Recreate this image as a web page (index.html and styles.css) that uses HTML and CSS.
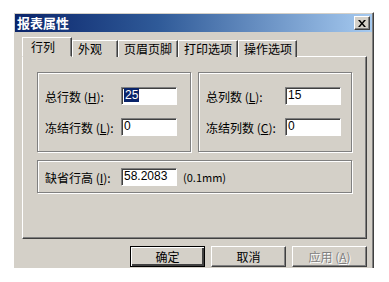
FILE: index.html
```html
<!DOCTYPE html>
<html lang="zh-CN">
<head>
    <meta charset="UTF-8">
    <title>报表属性</title>
    <link rel="stylesheet" href="styles.css">
</head>
<body>

    <div class="dialog">
        <div class="titlebar">
            <span class="title">报表属性</span>
            <span class="close-btn">
                <svg width="8" height="7" viewBox="0 0 8 7">
                    <path d="M0 0h2l2 2.5 2-2.5h2l-3 3.5 3 3.5h-2l-2-2.5-2 2.5h-2l3-3.5z" fill="#000"/>
                </svg>
            </span>
        </div>

        <div class="dialog-body">
            <!-- Tabs -->
            <div class="tabs">
                <div class="tab active">行列</div>
                <div class="tab">外观</div>
                <div class="tab">页眉页脚</div>
                <div class="tab">打印选项</div>
                <div class="tab">操作选项</div>
            </div>

            <div class="panel">
                <div class="group-row">
                    <div class="group">
                        <div class="field">
                            <label class="lbl lbl-left">总行数 (<u>H</u>):</label>
                            <span class="edit"><span class="selected">25</span></span>
                        </div>
                        <div class="field">
                            <label class="lbl lbl-left">冻结行数 (<u>L</u>):</label>
                            <span class="edit">0</span>
                        </div>
                    </div>
                    <div class="group">
                        <div class="field">
                            <label class="lbl lbl-right">总列数 (<u>L</u>):</label>
                            <span class="edit">15</span>
                        </div>
                        <div class="field">
                            <label class="lbl lbl-right">冻结列数 (<u>C</u>):</label>
                            <span class="edit">0</span>
                        </div>
                    </div>
                </div>

                <div class="group group-wide">
                    <div class="field">
                        <label class="lbl lbl-bottom">缺省行高 (<u>I</u>):</label>
                        <span class="edit">58.2083</span>
                        <span class="unit">(0.1mm)</span>
                    </div>
                </div>
            </div>

            <!-- Buttons -->
            <div class="buttons">
                <button class="btn default">确定</button>
                <button class="btn">取消</button>
                <button class="btn disabled">应用 (<u>A</u>)</button>
            </div>
        </div>
    </div>

</body>
</html>
```

FILE: styles.css
```css
/* Basic Reset */
* {
    margin: 0;
    padding: 0;
    box-sizing: border-box;
}

body {
    font-family: "Noto Sans CJK SC", "DejaVu Sans", sans-serif;
    font-size: 12px;
    background-color: #fff;
    color: #000;
}

.dialog {
    margin: 12px 0 0 13px;
    width: 361px;
    height: 256px;
    padding: 1px 1px 0 1px;
    background-color: #d4d0c8;
    border-left: 1px solid #fff;
    border-top: 1px solid #fff;
    border-right: 1px solid #404040;
    box-shadow: inset -1px 0 0 #808080;
    overflow: hidden;
}

.titlebar {
    height: 18px;
    display: flex;
    align-items: center;
    justify-content: space-between;
    padding: 0 2px 0 2px;
    background: linear-gradient(to right, #0a246a 0%, #2f5a98 40%, #a6caf0 100%);
}

.title {
    color: #fff;
    font-weight: bold;
    font-size: 13px;
    line-height: 18px;
}

.close-btn {
    width: 16px;
    height: 14px;
    display: flex;
    align-items: center;
    justify-content: center;
    background-color: #d4d0c8;
    border-top: 1px solid #fff;
    border-left: 1px solid #fff;
    border-right: 1px solid #404040;
    border-bottom: 1px solid #404040;
    box-shadow: inset -1px -1px 0 #808080;
}

.dialog-body {
    padding: 5px 5px 0 7px;
}

/* Tabs */
.tabs {
    display: flex;
    align-items: flex-end;
    height: 20px;
    position: relative;
    z-index: 1;
    margin-bottom: -1px;
}

.tab {
    height: 17px;
    padding: 0 0 0 5px;
    line-height: 15px;
    white-space: nowrap;
    border-left: 1px solid #fff;
    border-top: 1px solid #fff;
    border-right: 1px solid #404040;
    box-shadow: inset -1px 0 0 #808080;
    background-color: #d4d0c8;
}

.tab.active {
    height: 20px;
    width: 50px;
    padding-left: 8px;
    line-height: 17px;
    border-bottom: 1px solid #d4d0c8;
}

.tab:nth-child(2) { width: 46px; }
.tab:nth-child(3) { width: 60px; }
.tab:nth-child(4) { width: 60px; }
.tab:nth-child(5) { width: 59px; }

/* Panel */
.panel {
    width: 345px;
    height: 183px;
    padding: 15px 14px 0 14px;
    border-left: 1px solid #fff;
    border-top: 1px solid #fff;
    border-right: 1px solid #404040;
    border-bottom: 1px solid #404040;
    box-shadow: inset -1px -1px 0 #808080;
}

.group-row {
    display: flex;
    gap: 7px;
    margin-bottom: 8px;
}

.group {
    width: 154px;
    height: 80px;
    padding: 14px 0 0 7px;
    display: flex;
    flex-direction: column;
    gap: 13px;
    border: 1px solid #808080;
    box-shadow: inset 1px 1px 0 #fff, 1px 1px 0 #fff;
}

.group-wide {
    width: 315px;
    height: 33px;
    padding-top: 7px;
}

.field {
    display: flex;
    align-items: center;
    height: 18px;
}

.lbl {
    white-space: nowrap;
    color: #000;
}

.lbl u {
    text-decoration: underline;
}

.lbl-left { width: 76px; }
.lbl-right { width: 79px; }
.lbl-bottom { width: 76px; }

.edit {
    width: 56px;
    height: 18px;
    padding: 0 0 0 2px;
    line-height: 15px;
    background-color: #fff;
    border-left: 1px solid #808080;
    border-top: 1px solid #808080;
    border-right: 1px solid #fff;
    border-bottom: 1px solid #fff;
    box-shadow: inset 1px 1px 0 #404040;
    font-family: "Liberation Sans", "Noto Sans CJK SC", sans-serif;
}

.edit .selected {
    background-color: #0a246a;
    color: #fff;
    padding: 0 1px;
}

.unit {
    margin-left: 6px;
    font-size: 11px;
}

/* Buttons */
.buttons {
    display: flex;
    justify-content: flex-end;
    gap: 6px;
    padding-top: 7px;
    width: 345px;
}

.btn {
    width: 75px;
    height: 21px;
    font-family: inherit;
    font-size: 12px;
    background-color: #d4d0c8;
    border-top: 1px solid #fff;
    border-left: 1px solid #fff;
    border-right: 1px solid #404040;
    border-bottom: 1px solid #404040;
    box-shadow: inset -1px -1px 0 #808080;
}

.btn.default {
    border: 1px solid #000;
    box-shadow: inset 1px 1px 0 #fff, inset -2px -2px 0 #404040;
}

.btn.disabled {
    color: #808080;
    text-shadow: 1px 1px 0 #fff;
}
```
